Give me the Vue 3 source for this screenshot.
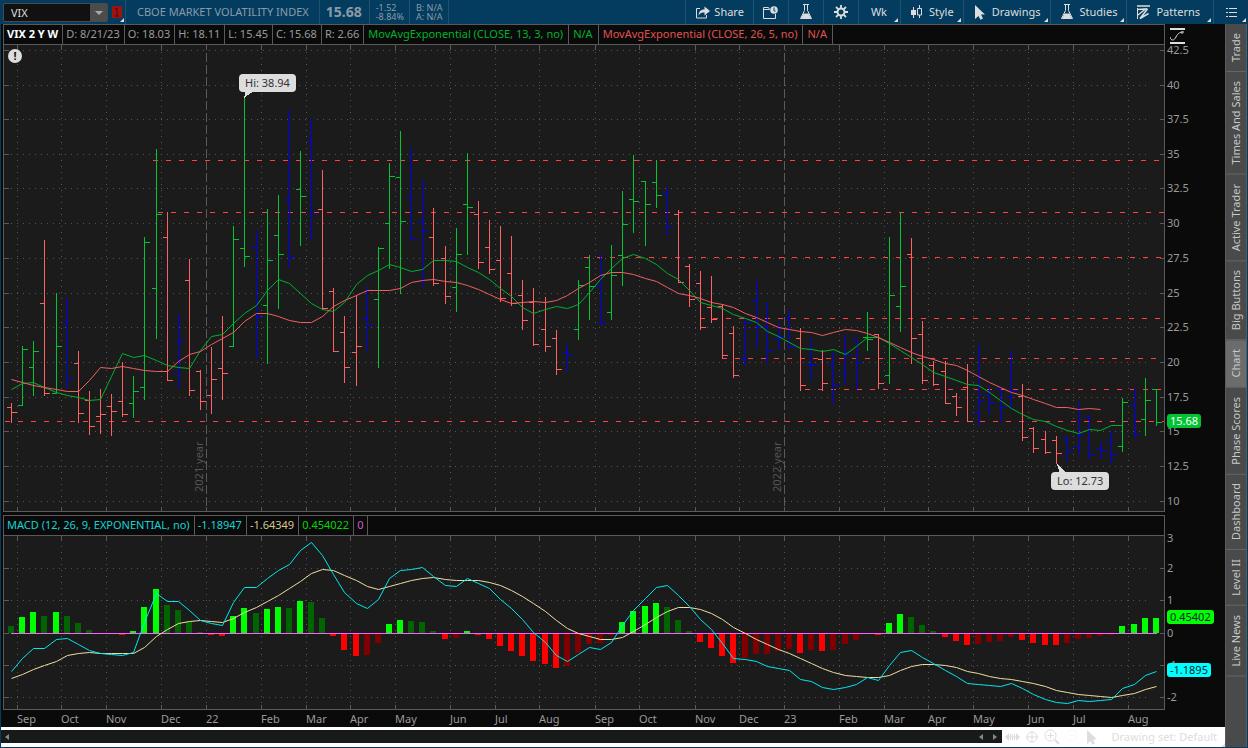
<script setup>
import { ref } from 'vue'

const symbol = ref('VIX')
const activeTab = ref('Chart')
const tabs = ['Trade', 'Times And Sales', 'Active Trader', 'Big Buttons', 'Chart', 'Phase Scores', 'Dashboard', 'Level II', 'Live News']

const quote = ['D: 8/21/23', 'O: 18.03', 'H: 18.11', 'L: 15.45', 'C: 15.68', 'R: 2.66']

// plot boxes in canvas units
const price = { x: 4, y: 45, w: 1160, h: 466 }
const macd = { x: 4, y: 536, w: 1160, h: 173 }
const box = (p) => `${p.x} ${p.y} ${p.w} ${p.h}`
const top = (p, y) => ({ top: ((y - p.y) / p.h) * 100 + '%' })
const spot = (p, x, y) => ({ left: ((x - p.x) / p.w) * 100 + '%', top: ((y - p.y) / p.h) * 100 + '%' })

const barX = (i) => Math.floor(11.6 + i * 11.113)

const priceTicks = [
  ['42.5', 50], ['40', 85], ['37.5', 119], ['35', 154], ['32.5', 188], ['30', 223], ['27.5', 258],
  ['25', 293], ['22.5', 327], ['20', 362], ['17.5', 397], ['15', 431], ['12.5', 466], ['10', 501]
]
const macdTicks = [['3', 538], ['2', 568], ['1', 600], ['0', 633], ['-1', 665], ['-2', 697]]

const months = [
  ['Sep', 17], ['Oct', 61], ['Nov', 106], ['Dec', 161], ['22', 206], ['Feb', 261], ['Mar', 306], ['Apr', 350],
  ['May', 395], ['Jun', 450], ['Jul', 495], ['Aug', 539], ['Sep', 595], ['Oct', 639], ['Nov', 695], ['Dec', 739],
  ['23', 784], ['Feb', 839], ['Mar', 884], ['Apr', 928], ['May', 973], ['Jun', 1028], ['Jul', 1073], ['Aug', 1128]
]
const isYear = (m) => m === '22' || m === '23'

// dashed price levels: start x, y
const levels = [[153, 160], [158, 212], [584, 257], [700, 318], [722, 358], [805, 389], [5, 421]]

// colour, high, low, open, close
const bars = `r 403 422 407 412,g 346 405 405 349,g 341 395 367 351,r 240 395 303 393,g 293 393 393 346,b 298 387 322 379
r 351 422 363 413,r 391 434 400 426,r 389 433 416 414,r 394 435 406 411,r 362 416 401 414,g 376 417 403 391
g 237 399 387 242,g 149 338 288 214,r 212 380 237 380,b 314 387 372 340,r 259 395 280 390,r 370 409 371 401
r 347 413 395 379,r 316 399 368 373,g 226 346 346 239,g 98 266 248 256,b 231 357 246 317,g 209 363 305 260
g 195 308 235 254,b 110 266 198 257,g 151 245 189 196,b 118 239 141 213,r 170 309 209 308,r 288 351 291 351
r 316 382 332 367,r 295 385 352 346,b 287 350 319 325,g 247 367 299 248,g 163 268 223 176,g 131 293 177 221
b 147 240 197 239,b 180 286 223 231,r 208 285 237 283,r 246 303 258 296,g 228 311 287 254,g 153 254 204 207
r 201 268 214 262,r 220 273 247 269,r 226 301 260 298,r 236 305 273 303,r 280 329 295 320,r 288 345 302 344
r 297 351 329 346,r 330 374 338 369,b 344 371 352 354,g 280 339 329 285,g 255 319 267 286,b 254 325 286 323
g 245 319 312 275,g 191 285 255 224,g 155 232 199 201,g 181 245 181 204,g 160 207 182 195,b 187 235 192 227
r 210 282 214 282,r 264 306 266 299,r 271 329 283 327,r 276 322 307 319,r 304 358 306 355,r 326 377 333 375
b 318 365 358 323,b 281 347 301 326,b 302 363 326 350,b 323 349 339 336,b 310 348 319 346,r 328 390 338 385
b 338 380 364 364,r 350 390 359 383,b 352 403 365 385,b 335 384 373 355,b 339 389 339 362,g 312 350 337 339
r 334 388 334 383,g 237 383 375 295,g 213 331 306 286,r 238 363 254 338,r 321 383 334 380,r 361 385 365 384
r 361 403 371 403,r 393 415 396 407,r 364 421 387 421,b 344 425 412 401,b 386 413 394 403,b 387 421 388 406
b 351 408 397 391,r 384 440 396 437,r 427 452 428 448,r 431 453 439 452,r 436 463 440 453,b 436 460 439 451
b 403 453 447 434,b 415 458 416 455,b 442 458 448 451,b 431 463 441 455,g 398 451 446 402,b 388 437 405 434
g 378 435 419 400,g 389 425 389 422`
  .split(/[,\n]/)
  .map((row, i) => {
    const [c, ...v] = row.split(' ')
    const [high, low, open, close] = v.map(Number)
    const x = barX(i) + 0.5
    return {
      c,
      d: `M${x} ${high}V${low + 1}M${x - 4.5} ${open + 0.5}H${x}M${x} ${close + 0.5}H${x + 5.5}`
    }
  })

const fast = [
  389, 383, 382, 387, 392, 395, 397, 400, 399, 376, 353, 357, 355, 360, 365, 367, 368, 350, 336, 334, 323, 313, 305,
  290, 279, 283, 293, 303, 309, 311, 302, 284, 275, 270, 264, 267, 271, 269, 260, 260, 261, 267, 272, 279, 288, 296,
  307, 313, 309, 306, 308, 304, 292, 279, 268, 258, 254, 258, 264, 273, 279, 290, 302, 305, 308, 314, 318, 322, 331,
  336, 342, 348, 349, 351, 349, 354, 346, 337, 337, 343, 350, 357, 364, 372, 376, 380, 384, 385, 392, 400, 408, 414,
  419, 421, 426, 430, 433, 429, 430, 425, 425
]
const slow = [
  379, 382, 385, 387, 389, 391, 391, 380, 367, 368, 366, 368, 370, 371, 371, 361, 354, 351, 344, 338, 332, 321, 313,
  313, 316, 320, 322, 322, 316, 306, 300, 295, 290, 290, 290, 288, 282, 280, 279, 281, 282, 285, 289, 294, 299, 303,
  302, 301, 302, 300, 295, 288, 282, 275, 272, 272, 274, 278, 281, 287, 293, 295, 298, 302, 304, 307, 313, 317, 322,
  327, 329, 331, 332, 335, 332, 329, 330, 333, 337, 342, 347, 352, 356, 359, 363, 365, 370, 376, 382, 387, 392, 395,
  399, 403, 407, 407, 409, 408, 409
]
const value = [
  671, 658, 648, 648, 639, 638, 644, 650, 653, 654, 655, 652, 622, 593, 601, 601, 610, 620, 623, 625, 602, 587, 587,
  578, 570, 564, 550, 542, 555, 574, 592, 603, 608, 599, 578, 570, 569, 567, 576, 585, 586, 578, 583, 588, 599, 608,
  619, 632, 642, 655, 661, 654, 647, 649, 642, 625, 610, 598, 587, 585, 595, 606, 619, 629, 643, 658, 659, 661, 666,
  668, 670, 679, 681, 687, 689, 687, 684, 677, 680, 665, 652, 650, 657, 663, 670, 676, 683, 684, 685, 686, 683, 688,
  694, 699, 702, 703, 700, 701, 700, 699, 688, 684, 675, 671
]
const signal = [
  678, 674, 669, 665, 661, 655, 653, 652, 653, 653, 653, 653, 647, 636, 629, 623, 621, 620, 621, 622, 618, 612, 607,
  601, 595, 588, 581, 573, 569, 570, 575, 580, 586, 589, 586, 583, 580, 578, 577, 579, 580, 580, 580, 582, 585, 590,
  596, 603, 611, 620, 628, 633, 636, 639, 639, 637, 631, 624, 617, 611, 607, 607, 609, 613, 619, 627, 633, 639, 644,
  649, 653, 658, 663, 668, 672, 675, 676, 677, 677, 675, 670, 666, 664, 664, 665, 667, 671, 673, 676, 678, 679, 681,
  683, 686, 690, 692, 694, 695, 696, 697, 695, 693, 689, 686
]
const line = (ys) => ys.map((y, i) => `${barX(i) + 0.5},${y + 0.5}`).join(' ')

const zero = 633
const diff = [
  626, 617, 612, 616, 612, 616, 623, 630, 633, 634, 635, 631, 607, 589, 605, 610, 622, 632, 635, 636, 616, 608, 613,
  609, 607, 608, 601, 602, 618, 636, 650, 656, 655, 643, 624, 620, 621, 622, 631, 639, 638, 631, 635, 639, 646, 651,
  656, 661, 664, 668, 666, 653, 644, 643, 635, 622, 611, 606, 603, 607, 620, 631, 642, 648, 656, 663, 658, 654, 654,
  651, 649, 653, 650, 651, 650, 644, 640, 633, 635, 623, 614, 617, 625, 631, 637, 641, 645, 644, 642, 641, 637, 640,
  643, 645, 645, 643, 639, 638, 636, 635, 626, 624, 618, 618
]
let strong = false
const histogram = diff.map((y, i) => {
  const up = y < zero
  // a bar that grows away from zero is bright, one that shrinks is dark
  if (i > 0 && y !== diff[i - 1]) strong = up ? y < diff[i - 1] : y > diff[i - 1]
  return {
    x: barX(i) - 3,
    y: Math.min(y, zero),
    h: Math.abs(zero - y),
    c: (up ? 'up' : 'down') + (strong ? '' : '-weak')
  }
})
</script>

<template>
  <div class="app">
    <header class="toolbar">
      <div class="combo">
        <input v-model="symbol" class="symbol" type="text" aria-label="Symbol">
        <button class="drop" type="button" aria-label="Symbol list"><svg width="8" height="4"><path d="M0 0h8l-4 4z" fill="#aaa" /></svg></button>
      </div>
      <button class="link" type="button" aria-label="Link colour">
        <svg width="12" height="14" viewBox="0 0 12 14"><rect x="1" y="1" width="10" height="12" rx="1" fill="#a01210" /><path d="M4 4l2-1v8M4 11h4" stroke="#4a0a0a" fill="none" /></svg>
        <i class="corner"></i>
      </button>
      <div class="title">CBOE MARKET VOLATILITY INDEX</div>
      <div class="last">15.68</div>
      <div class="pair"><span>-1.52</span><span>-8.84%</span></div>
      <div class="pair bid"><span>B: N/A</span><span>A: N/A</span></div>
      <nav class="tools">
        <button class="share" type="button">
          <svg width="15" height="13" viewBox="0 0 15 13"><path d="M5 2.500H1.500v9.500h10V9" fill="none" stroke="#ddd" /><path d="M3.500 9.500C4 5 6 3.500 9.500 3.500V.5L15 5l-5.500 4.500v-3C7 6.500 5 7 3.500 9.500z" fill="#ddd" /></svg>
          Share
        </button>
        <button class="icon" type="button" aria-label="Report">
          <svg width="15" height="13" viewBox="0 0 15 13"><path d="M.5 12.500V1.500h5l1 2H.5M.5 12.500h12V8" fill="none" stroke="#ddd" /><circle cx="11" cy="4" r="3.800" fill="#ddd" /><path d="M11 1.500V5h1.500" stroke="#033c5e" fill="none" /></svg>
        </button>
        <button class="icon" type="button" aria-label="Edit studies">
          <svg width="14" height="16" viewBox="0 0 14 16"><path d="M4 .5h6M5.500 1v5.500L1.500 14.500h11l-4-8V1" fill="none" stroke="#ddd" /><path d="M4.500 9.500h5l2.500 5H2z" fill="#ddd" /></svg>
        </button>
        <button class="icon" type="button" aria-label="Settings">
          <svg width="14" height="14" viewBox="0 0 14 14"><circle cx="7" cy="7" r="3.500" fill="none" stroke="#ddd" stroke-width="2" /><path d="M7 0v3M7 11v3M0 7h3M11 7h3M2 2l2.200 2.200M9.800 9.800L12 12M12 2L9.800 4.200M4.200 9.800L2 12" stroke="#ddd" stroke-width="1.800" /></svg>
        </button>
        <button class="wk" type="button">Wk<i class="corner"></i></button>
        <button type="button">
          <svg width="13" height="14" viewBox="0 0 13 14"><path d="M3.500 2v11M9.500 0v3M9.500 10v3" stroke="#ddd" /><path d="M1 5h5v5H1z" fill="#ddd" /><path d="M7.500 3.500h4v6.500h-4z" fill="none" stroke="#ddd" /></svg>
          Style<i class="corner"></i>
        </button>
        <button type="button">
          <svg width="13" height="15" viewBox="0 0 13 15"><path d="M2 0l10 9.500H8l2 4-2.500 1.200L5.500 11 2 14z" fill="#ddd" /></svg>
          Drawings<i class="corner"></i>
        </button>
        <button type="button">
          <svg width="14" height="16" viewBox="0 0 14 16"><path d="M4 .5h6M5.500 1v5.500L1.500 14.500h11l-4-8V1" fill="none" stroke="#ddd" /><path d="M4.500 9.500h5l2.500 5H2z" fill="#ddd" /></svg>
          Studies<i class="corner"></i>
        </button>
        <button class="patterns" type="button">
          <svg width="14" height="15" viewBox="0 0 14 15"><path d="M1 1h13" stroke="#ddd" stroke-width="1.500" /><path d="M1.500 4.500l8-.5L2 10M11.500 4L4 13.500l8.500-5" fill="none" stroke="#ddd" stroke-width="1.500" /><path d="M1.500 3v11" stroke="#ddd" /></svg>
          Patterns<i class="corner"></i>
        </button>
        <button class="icon" type="button" aria-label="Menu">
          <svg width="11" height="11" viewBox="0 0 11 11"><path d="M0 1.500h2M0 5.500h2M0 9.500h2M3 1.500h8M3 5.500h8M3 9.500h8" stroke="#ddd" /></svg>
          <i class="corner"></i>
        </button>
      </nav>
    </header>

    <div class="body">
      <main class="charts">
        <section class="pane price">
          <div class="frame">
            <div class="legend">
              <b>VIX 2 Y W</b>
              <span v-for="q in quote" :key="q">{{ q }}</span>
              <span class="green">MovAvgExponential (CLOSE, 13, 3, no)</span>
              <span class="green">N/A</span>
              <span class="red">MovAvgExponential (CLOSE, 26, 5, no)</span>
              <span class="red">N/A</span>
            </div>
            <div class="plot">
              <svg class="canvas" :viewBox="box(price)" preserveAspectRatio="none">
                <g class="grid">
                  <path v-for="t in priceTicks" :key="t[0]" :d="`M11 ${t[1] + 0.5}H1150`" />
                  <template v-for="m in months" :key="m[1]">
                    <path v-if="!isYear(m[0])" :d="`M${m[1] + 0.5} 52V505`" />
                  </template>
                </g>
                <g class="ticks">
                  <path v-for="t in priceTicks" :key="t[0]" :d="`M4 ${t[1] + 0.5}H9M1160 ${t[1] + 0.5}H1164`" />
                  <path v-for="m in months" :key="m[1]" :d="`M${m[1] + 0.5} 45V50M${m[1] + 0.5} 507V511`" />
                </g>
                <path class="year" d="M206.500 53V511M784.500 53V511" />
                <path v-for="l in levels" :key="l[1]" class="level" :d="`M${l[0]} ${l[1] + 0.5}H1164`" />
                <path v-for="(b, i) in bars" :key="i" :class="['bar', b.c]" :d="b.d" />
                <polyline class="ema fast" :points="line(fast)" />
                <polyline class="ema slow" :points="line(slow)" />
                <path class="tail" d="M244 98l2-8h9zM1057 464l3 9h7z" />
              </svg>
              <span class="notice" :style="spot(price, 8, 49)">!</span>
              <span class="year-label" :style="spot(price, 206, 492)">2021 year</span>
              <span class="year-label" :style="spot(price, 784, 492)">2022 year</span>
              <span class="bubble" :style="spot(price, 239, 74)">Hi: 38.94</span>
              <span class="bubble" :style="spot(price, 1051, 472)">Lo: 12.73</span>
            </div>
          </div>
          <div class="axis">
            <button class="fit" type="button" aria-label="Scale">
              <svg width="16" height="16" viewBox="0 0 16 16"><path d="M0 1h15M0 15h15" stroke="#ddd" stroke-width="2" /><path d="M0 9c1 4 4 4 6 0s4-5 8-5M12 3v3" fill="none" stroke="#ddd" /></svg>
            </button>
            <div class="scale">
              <span v-for="t in priceTicks" :key="t[0]" class="num" :style="top(price, t[1])">{{ t[0] }}</span>
              <span class="tag now" :style="top(price, 421)">15.68</span>
            </div>
          </div>
        </section>

        <section class="pane lower">
          <div class="frame">
            <div class="legend">
              <span class="cyan">MACD (12, 26, 9, EXPONENTIAL, no)</span>
              <span class="cyan">-1.18947</span>
              <span class="sand">-1.64349</span>
              <span class="lime">0.454022</span>
              <span class="pink">0</span>
            </div>
            <div class="plot">
              <svg class="canvas" :viewBox="box(macd)" preserveAspectRatio="none">
                <g class="grid">
                  <path v-for="t in macdTicks.slice(1)" :key="t[0]" :d="`M11 ${t[1] + 0.5}H1150`" />
                  <path v-for="m in months" :key="m[1]" :d="`M${m[1] + 0.5} 546V703`" />
                </g>
                <g class="ticks">
                  <path v-for="t in macdTicks.slice(1)" :key="t[0]" :d="`M4 ${t[1] + 0.5}H9M1160 ${t[1] + 0.5}H1164`" />
                  <path v-for="m in months" :key="m[1]" :d="`M${m[1] + 0.5} 536V541M${m[1] + 0.5} 705V709`" />
                </g>
                <rect v-for="(h, i) in histogram" :key="i" :class="h.c" :x="h.x" :y="h.y" width="6" :height="h.h" />
                <path class="zero" d="M11 633.500H1157" />
                <polyline class="ema signal" :points="line(signal)" />
                <polyline class="ema value" :points="line(value)" />
              </svg>
            </div>
          </div>
          <div class="axis">
            <div></div>
            <div class="scale">
              <span v-for="t in macdTicks" :key="t[0]" class="num" :style="top(macd, t[1])">{{ t[0] }}</span>
              <span class="tag diff" :style="top(macd, 617)">0.45402</span>
              <span class="tag val" :style="top(macd, 670)">-1.1895</span>
            </div>
          </div>
        </section>

        <div class="dates">
          <div class="dates-track">
            <span v-for="m in months" :key="m[1]" :style="{ left: ((m[1] - 4) / 1160) * 100 + '%' }">{{ m[0] }}</span>
          </div>
        </div>

        <footer class="footer">
          <div class="scrollbar">
            <svg width="4" height="6"><path d="M4 0v6L0 3z" fill="#888" /></svg>
            <span class="steps">
              <svg width="4" height="6"><path d="M4 0v6L0 3z" fill="#888" /></svg>
              <svg width="4" height="6"><path d="M0 0v6l4-3z" fill="#888" /></svg>
            </span>
          </div>
          <div class="draw">
            <svg width="15" height="10" viewBox="0 0 15 10"><path d="M0 5l4-4v8zM15 5l-4-4v8z" fill="#ddd" /><path d="M5.500 2v6M7.500 2v6M9.500 2v6M3 5h9" stroke="#ddd" /></svg>
            <svg width="14" height="14" viewBox="0 0 14 14"><circle cx="7" cy="7" r="5" fill="none" stroke="#ddd" /><path d="M7 1v12M1 7h12" stroke="#ddd" /></svg>
            <svg width="16" height="16" viewBox="0 0 16 16"><circle cx="6.500" cy="6.500" r="5.500" fill="none" stroke="#ddd" /><path d="M6.500 3.500v6M3.500 6.500h6" stroke="#ddd" /><path d="M11 11l4 4" stroke="#ddd" stroke-width="2" /></svg>
            <svg width="16" height="16" viewBox="0 0 16 16"><circle cx="6.500" cy="6.500" r="5.500" fill="none" stroke="#f8f8f8" /><path d="M3.500 6.500h6M11 11l4 4" stroke="#f8f8f8" /></svg>
            <svg class="arrow" width="13" height="15" viewBox="0 0 13 15"><path d="M1 0l10 9.500H7l2 4-2.500 1.200L4.500 11 1 14z" fill="#ddd" /></svg>
            <button type="button">Drawing set: Default<i class="corner"></i></button>
          </div>
        </footer>
      </main>

      <aside class="tabs">
        <button v-for="t in tabs" :key="t" type="button" :class="{ active: t === activeTab }" @click="activeTab = t">{{ t }}</button>
      </aside>
    </div>
  </div>
</template>

<style>
body {
  background: #0a0a0a;
}
</style>

<style scoped>
.app {
  box-sizing: border-box;
  height: 100vh;
  min-height: 500px;
  display: flex;
  flex-direction: column;
  border-bottom: 1px solid #033c5e;
  background: #0a0a0a;
  color: #9a9a9a;
  font: 11px/14px "Noto Sans", "Open Sans", sans-serif;
}
button,
input {
  font: inherit;
  color: inherit;
  border: 0;
  padding: 0;
  background: none;
}
svg {
  display: block;
  flex: none;
}
.corner {
  position: absolute;
  right: 2px;
  bottom: 2px;
  border-left: 4px solid transparent;
  border-bottom: 4px solid #ddd;
}

.toolbar {
  height: 24px;
  flex: none;
  display: flex;
  align-items: stretch;
  background: #033c5e;
  color: #8b9ba6;
  white-space: nowrap;
}
.combo {
  box-sizing: border-box;
  width: 105px;
  height: 19px;
  margin: 3px 0 0 3px;
  display: flex;
  border: 1px solid #4a4a4a;
  border-radius: 2px;
  background: #111;
}
.symbol {
  min-width: 0;
  flex: 1;
  padding-left: 7px;
  color: #ddd;
  outline: none;
}
.drop {
  width: 17px;
  display: grid;
  place-items: center;
  background: #4c4c4c;
}
.link {
  position: relative;
  width: 18px;
  padding-left: 3px;
  border-right: 1px solid #1d5273;
}
.link .corner {
  right: 1px;
}
.title,
.last,
.pair {
  display: flex;
  align-items: center;
  border-right: 1px solid #1d5273;
}
.title {
  padding: 0 10px 0 11px;
}
.last {
  padding: 0 7px 0 6px;
  font-size: 14px;
  font-weight: 700;
}
.pair {
  flex-direction: column;
  align-items: flex-start;
  justify-content: center;
  padding: 0 5px 0 6px;
  font-size: 9px;
  line-height: 9px;
}
.tools {
  margin-left: auto;
  display: flex;
  color: #ddd;
}
.tools button {
  position: relative;
  display: flex;
  align-items: center;
  gap: 6px;
  padding: 0 9px;
  border-left: 1px solid #1d5273;
}
.tools .share {
  gap: 4px;
}
.tools .icon {
  width: 35px;
  padding: 0;
  justify-content: center;
}
.tools .wk {
  padding: 0 13px 0 12px;
}
.tools .patterns {
  padding-right: 13px;
}

.body {
  flex: 1;
  min-height: 0;
  display: flex;
  border: solid #033c5e;
  border-width: 0 1px;
}
.charts {
  flex: 1;
  min-width: 0;
  display: flex;
  flex-direction: column;
}
.pane {
  min-height: 0;
  display: grid;
  grid-template-columns: 1fr 60px;
  padding-left: 2px;
}
.price {
  flex: 488 1 0;
  margin-bottom: 3px;
}
.lower {
  flex: 195 1 0;
}
.frame {
  min-width: 0;
  display: grid;
  grid-template-rows: 19px 1fr;
  row-gap: 1px;
  border: 1px solid #5a5a5a;
  background: #5a5a5a;
}
.legend {
  display: flex;
  background: #0a0a0a;
  line-height: 18px;
  white-space: nowrap;
  overflow: hidden;
}
.legend > * {
  padding: 0 4px 0 3px;
  border-right: 1px solid #5a5a5a;
}
.legend b {
  color: #fff;
}
.legend .green,
.legend .red {
  padding: 0 5px 0 4px;
}
.green {
  color: #00b32d;
}
.red {
  color: #e05252;
}
.cyan {
  color: #12d3d3;
}
.sand {
  color: #d6c78e;
}
.lime {
  color: #00d800;
}
.pink {
  color: #d05cd0;
}
.plot {
  position: relative;
  background: #1b1b1b;
}
.canvas {
  position: absolute;
  inset: 0;
  width: 100%;
  height: 100%;
  shape-rendering: crispEdges;
}
.canvas path,
.canvas polyline {
  fill: none;
  vector-effect: non-scaling-stroke;
}
.canvas .grid {
  stroke: #555;
  stroke-dasharray: 1 5;
}
.ticks {
  stroke: #5a5a5a;
}
.year {
  stroke: #5a5a5a;
  stroke-dasharray: 9 3;
}
.level {
  stroke: #ff4040;
  stroke-dasharray: 5 8;
}
.bar.g {
  stroke: #00c432;
}
.bar.r {
  stroke: #ff6060;
}
.bar.b {
  stroke: #0000f0;
}
.ema {
  shape-rendering: auto;
}
.fast {
  stroke: #00b02d;
}
.slow {
  stroke: #f06060;
}
.signal {
  stroke: #f0dea0;
}
.value {
  stroke: #00e8f0;
}
.zero {
  stroke: #ff60ff;
}
.canvas .tail {
  fill: #ddd;
}
.up {
  fill: #00ff00;
}
.up-weak {
  fill: #006400;
}
.down {
  fill: #ff0000;
}
.down-weak {
  fill: #800000;
}
.notice {
  position: absolute;
  width: 14px;
  height: 14px;
  border-radius: 50%;
  background: #ddd;
  color: #111;
  font-weight: 700;
  text-align: center;
}
.year-label {
  position: absolute;
  color: #555;
  white-space: nowrap;
  writing-mode: vertical-rl;
  transform: translate(-100%, -100%) rotate(180deg);
}
.bubble {
  position: absolute;
  padding: 2px 6px;
  border-radius: 4px;
  background: #ddd;
  color: #333;
}

.axis {
  display: grid;
  grid-template-rows: 21px 1fr;
}
.fit {
  padding: 2px 0 0 5px;
}
.scale {
  position: relative;
  margin-bottom: 1px;
}
.num,
.tag {
  position: absolute;
  left: 2px;
  transform: translateY(-50%);
}
.tag {
  padding: 0 3px;
  border-radius: 3px;
}
.now {
  background: #00c432;
  color: #fff;
}
.diff {
  background: #00ff00;
  color: #123;
}
.val {
  background: #00ffff;
  color: #123;
}
.dates {
  height: 17px;
  flex: none;
  padding: 0 61px 0 3px;
}
.dates-track {
  position: relative;
}
.dates span {
  position: absolute;
  top: 2px;
}

.footer {
  height: 20px;
  flex: none;
  display: flex;
  align-items: center;
  background: #fff;
}
.scrollbar {
  height: 13px;
  flex: 1;
  display: flex;
  align-items: center;
  justify-content: space-between;
  padding: 0 5px 0 4px;
  margin-bottom: 1px;
  background: #171a19;
}
.steps {
  display: flex;
  gap: 10px;
}
.draw {
  position: relative;
  display: flex;
  align-items: center;
  gap: 5px;
  padding-left: 3px;
  color: #ddd;
}
.draw .arrow {
  margin-right: 8px;
}
.draw button {
  padding-right: 8px;
}
.draw .corner {
  right: 0;
  bottom: -2px;
}

.tabs {
  box-sizing: border-box;
  width: 22px;
  flex: none;
  display: flex;
  flex-direction: column;
  border: solid #5a5a5a;
  border-width: 0 1px;
  background: #4a4a4a;
  color: #c8c8c8;
}
.tabs button {
  padding: 9px 0;
  display: flex;
  justify-content: center;
  border-top: 1px solid #666;
  writing-mode: vertical-rl;
  transform: rotate(180deg);
  line-height: 20px;
}
.tabs .active {
  background: #6c6c6c;
}
</style>
